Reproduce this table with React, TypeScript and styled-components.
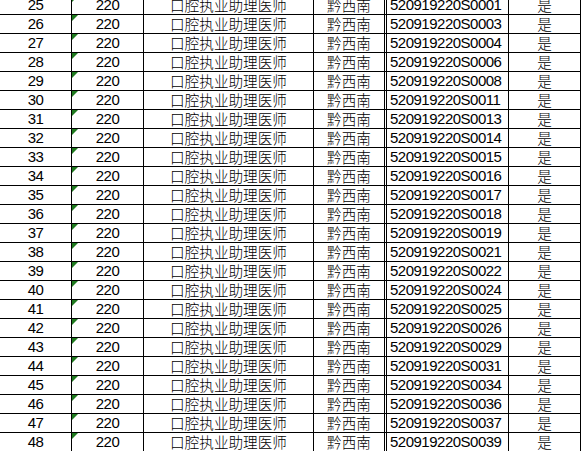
import React from "react";
import styled, { createGlobalStyle } from "styled-components";

const Global = createGlobalStyle`
  html, body {
    margin: 0;
    padding: 0;
    background: #ffffff;
    overflow: hidden;
  }
  body {
    width: 581px;
    height: 451px;
  }
`;

const Sheet = styled.div`
  width: 581px;
  height: 451px;
  overflow: hidden;
  background: #fff;
`;

const Rows = styled.div`
  display: flex;
  flex-direction: column;
  margin-top: -4px;
`;

const Row = styled.div`
  display: flex;
  height: 19px;
  box-sizing: border-box;
  border-bottom: 1px solid #000;
`;

const Cell = styled.div<{ $w: number; $align?: "left" | "center"; $cjk?: boolean; $double?: boolean }>`
  position: relative;
  box-sizing: border-box;
  flex: 0 0 ${(p) => p.$w}px;
  width: ${(p) => p.$w}px;
  height: 18px;
  border-right: 1px solid #000;
  ${(p) => (p.$double ? "border-left: 1px solid #000; margin-left: 1px;" : "")}
  display: flex;
  align-items: center;
  justify-content: ${(p) => (p.$align === "left" ? "flex-start" : "center")};
  padding-left: ${(p) => (p.$align === "left" ? "3px" : "0")};
  color: #000;
  white-space: nowrap;
  font-family: ${(p) =>
    p.$cjk
      ? `"Noto Sans CJK SC", "Noto Sans", sans-serif`
      : `"Liberation Sans", "Noto Sans CJK SC", sans-serif`};
  font-weight: ${(p) => (p.$cjk ? 300 : 400)};
  font-size: ${(p) => (p.$cjk ? "14.6px" : "15px")};
  letter-spacing: ${(p) => (p.$cjk ? "0" : "-0.5px")};
  line-height: 18px;
`;

const Marker = styled.span`
  position: absolute;
  top: 0;
  left: 0;
  width: 0;
  height: 0;
  border-top: 6px solid #1f7a1f;
  border-right: 6px solid transparent;
`;

const ids = [
  "0001", "0003", "0004", "0006", "0008", "0011", "0013", "0014",
  "0015", "0016", "0017", "0018", "0019", "0021", "0022", "0024",
  "0025", "0026", "0029", "0031", "0034", "0036", "0037", "0039",
];

export default function App() {
  return (
    <>
      <Global />
      <Sheet>
        <Rows>
          {ids.map((id, i) => (
            <Row key={id}>
              <Cell $w={72}>{25 + i}</Cell>
              <Cell $w={72}>
                <Marker />
                220
              </Cell>
              <Cell $w={170} $cjk>
                口腔执业助理医师
              </Cell>
              <Cell $w={71} $cjk>
                黔西南
              </Cell>
              <Cell $w={123} $align="left" $double>
                520919220S{id}
              </Cell>
              <Cell $w={72} $cjk>
                是
              </Cell>
            </Row>
          ))}
        </Rows>
      </Sheet>
    </>
  );
}
